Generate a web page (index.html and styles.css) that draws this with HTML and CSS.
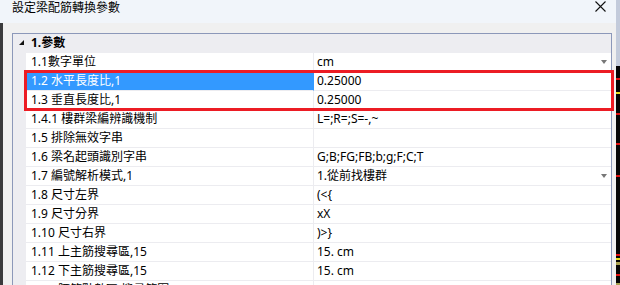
FILE: index.html
```html
<!DOCTYPE html>
<html lang="zh-TW">

<head>
    <meta charset="UTF-8">
    <title>設定梁配筋轉換參數</title>
    <link rel="stylesheet" href="styles.css">
</head>

<body>
    <div class="screen">
        <div class="window">
            <div class="titlebar">
                <span class="title">設定梁配筋轉換參數</span>
                <svg class="close" width="11" height="11" viewBox="0 0 11 11">
                    <path d="M0.5 0.5 L10.5 10.5 M10.5 0.5 L0.5 10.5" stroke="#111" stroke-width="1.1" fill="none"/>
                </svg>
            </div>
            <div class="client">
                <div class="grid">
                    <!-- 分類列 -->
                    <div class="cat-row">
                        <div class="gutter"><span class="expander"></span></div>
                        <div class="cat-name">1.參數</div>
                    </div>

                    <div class="row">
                        <div class="gutter"></div>
                        <div class="name">1.1數字單位</div>
                        <div class="value">cm<span class="arrow"></span></div>
                    </div>
                    <div class="row selected">
                        <div class="gutter"></div>
                        <div class="name">1.2 水平長度比,1</div>
                        <div class="value">0.25000</div>
                    </div>
                    <div class="row">
                        <div class="gutter"></div>
                        <div class="name">1.3 垂直長度比,1</div>
                        <div class="value">0.25000</div>
                    </div>
                    <div class="row">
                        <div class="gutter"></div>
                        <div class="name">1.4.1 樓群梁編辨識機制</div>
                        <div class="value">L=;R=;S=-,~</div>
                    </div>
                    <div class="row">
                        <div class="gutter"></div>
                        <div class="name">1.5 排除無效字串</div>
                        <div class="value"></div>
                    </div>
                    <div class="row">
                        <div class="gutter"></div>
                        <div class="name">1.6 梁名起頭識別字串</div>
                        <div class="value">G;B;FG;FB;b;g;F;C;T</div>
                    </div>
                    <div class="row">
                        <div class="gutter"></div>
                        <div class="name">1.7 編號解析模式,1</div>
                        <div class="value">1.從前找樓群<span class="arrow"></span></div>
                    </div>
                    <div class="row">
                        <div class="gutter"></div>
                        <div class="name">1.8 尺寸左界</div>
                        <div class="value">(&lt;{</div>
                    </div>
                    <div class="row">
                        <div class="gutter"></div>
                        <div class="name">1.9 尺寸分界</div>
                        <div class="value">xX</div>
                    </div>
                    <div class="row">
                        <div class="gutter"></div>
                        <div class="name">1.10 尺寸右界</div>
                        <div class="value">)&gt;}</div>
                    </div>
                    <div class="row">
                        <div class="gutter"></div>
                        <div class="name">1.11 上主筋搜尋區,15</div>
                        <div class="value">15. cm</div>
                    </div>
                    <div class="row">
                        <div class="gutter"></div>
                        <div class="name">1.12 下主筋搜尋區,15</div>
                        <div class="value">15. cm</div>
                    </div>
                    <div class="row">
                        <div class="gutter"></div>
                        <div class="name">1.13 腰筋點數區,搜尋範圍</div>
                        <div class="value"></div>
                    </div>
                </div>
            </div>
            <!-- 標示框 -->
            <div class="mark"></div>
        </div>
        <div class="backdrop">
            <span class="dash red" style="top: 78px"></span>
            <span class="dash yellow" style="top: 92px"></span>
            <span class="dash red" style="top: 113px"></span>
            <span class="dash red" style="top: 143px"></span>
            <span class="dash red" style="top: 175px"></span>
            <span class="dash red" style="top: 254px"></span>
            <span class="dash yellow" style="top: 258px"></span>
            <span class="dash olive" style="top: 262px"></span>
            <span class="dash red" style="top: 274px"></span>
            <span class="dash olive" style="top: 283px"></span>
        </div>
    </div>
</body>

</html>
```

FILE: styles.css
```css
body {
    margin: 0;
    font-family: "Noto Sans", "Noto Sans CJK TC", sans-serif;
    font-size: 12px;
    color: #000;
    background: #f0f0f0;
    overflow: hidden;
}
.screen {
    display: flex;
    width: 620px;
    height: 285px;
    overflow: hidden;
}
.window {
    position: relative;
    width: 616px;
    flex: none;
    background: #f0f0f0;
}
.titlebar {
    height: 23px;
    display: flex;
    justify-content: space-between;
    align-items: flex-start;
    padding: 0 10px 0 12px;
    background: #f1f5fa;
}
.title {
    line-height: 16px;
}
.close {
    margin-top: 1px;
}
.client {
    border-left: 3px solid #3a3a3c;
    padding: 10px 4px 0 9px;
    height: 262px;
    box-sizing: border-box;
}
.grid {
    border: 1px solid #8c98b9;
    border-bottom: none;
    background: #fff;
    height: 100%;
    overflow: hidden;
}
.cat-row, .row {
    display: flex;
    height: 19px;
    line-height: 18px;
}
.gutter {
    width: 13px;
    flex: none;
    background: #ededf1;
    position: relative;
}
.cat-row {
    background: #ededf1;
}
.cat-name {
    padding-left: 5px;
    font-weight: bold;
}
.expander {
    position: absolute;
    left: 6px;
    top: 6px;
    width: 0;
    height: 0;
    border-left: 5px solid transparent;
    border-bottom: 5px solid #111;
}
.name {
    width: 288px;
    flex: none;
    box-sizing: border-box;
    padding-left: 5px;
    border-right: 1px solid #ececf0;
    border-bottom: 1px solid #ececf0;
    white-space: nowrap;
    overflow: hidden;
}
.value {
    flex: 1;
    padding-left: 3px;
    border-bottom: 1px solid #ececf0;
    display: flex;
    justify-content: space-between;
    align-items: center;
    white-space: nowrap;
}
.row.selected .name {
    background: #3399ff;
    color: #fff;
    border-right-color: #3399ff;
}
.arrow {
    width: 0;
    height: 0;
    margin-right: 4px;
    border-left: 3.5px solid transparent;
    border-right: 3.5px solid transparent;
    border-top: 4px solid #777;
}
.mark {
    position: absolute;
    left: 24px;
    top: 70px;
    width: 590px;
    height: 41px;
    box-sizing: border-box;
    border: 3px solid #ec1c24;
}
.backdrop {
    position: relative;
    flex: 1;
    background: linear-gradient(#c3cbdb 0, #c3cbdb 66px, #050505 66px);
}
.dash {
    position: absolute;
    left: 0;
    right: 0;
    height: 2px;
}
.dash.red { background: #e01010; }
.dash.yellow { background: #e8e020; }
.dash.olive { background: #a8a050; height: 3px; }
```
